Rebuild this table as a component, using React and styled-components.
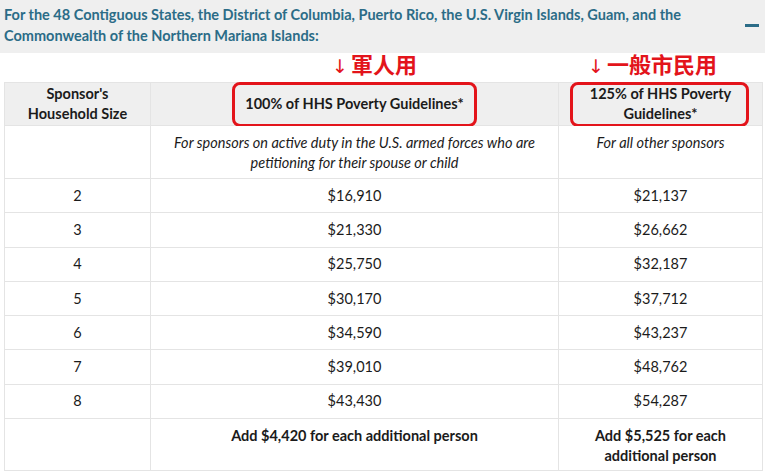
import React from "react";
import styled, { createGlobalStyle } from "styled-components";

const Global = createGlobalStyle`
  html, body {
    margin: 0;
    padding: 0;
    background: #ffffff;
  }
  body {
    font-family: "Lato", "Liberation Sans", sans-serif;
    color: #1b1b1b;
  }
`;

const Page = styled.div`
  width: 765px;
  height: 472px;
  overflow: hidden;
  background: #fff;
`;

const Banner = styled.div`
  height: 53px;
  background: #efefef;
  display: flex;
  align-items: flex-start;
  justify-content: space-between;
  padding: 4px 6px 0 4px;
  box-sizing: border-box;
`;

const BannerText = styled.p`
  margin: 0;
  font-size: 14.5px;
  line-height: 21px;
  font-weight: 700;
  color: #2b6c87;
  width: 710px;
`;

const Minus = styled.span`
  display: block;
  width: 14px;
  height: 2.5px;
  background: #2b6c87;
  margin-top: 20px;
`;

const Notes = styled.div`
  display: grid;
  grid-template-columns: 329px 256px 180px;
  height: 29px;
  align-items: start;
`;

const Note = styled.span`
  grid-column: ${(p) => p.col};
  font-family: "Noto Sans CJK TC", "Noto Sans CJK JP", sans-serif;
  font-weight: 700;
  font-size: 22px;
  line-height: 24px;
  color: #e3141b;
  padding-left: ${(p) => p.pad}px;
  margin-top: -2px;
`;

const Arrow = styled.span`
  font-weight: 400;
  font-family: "DejaVu Sans", sans-serif;
  font-size: 19px;
  margin-right: 3px;
`;

const Table = styled.div`
  margin-left: 4px;
  width: 758px;
  display: grid;
  grid-template-columns: 146px 408px 204px;
  border-left: 1px solid #e4e4e4;
  border-top: 1px solid #e4e4e4;
`;

const Cell = styled.div`
  position: relative;
  box-sizing: border-box;
  height: ${(p) => p.h}px;
  border-right: 1px solid #e4e4e4;
  border-bottom: 1px solid #e4e4e4;
  background: ${(p) => (p.head ? "#efefef" : "#fff")};
  display: flex;
  align-items: ${(p) => (p.top ? "flex-start" : "center")};
  justify-content: center;
  text-align: center;
  padding: ${(p) => (p.top ? "7px 8px 0" : "0 8px")};
  font-size: 14.5px;
  line-height: 20px;
  font-weight: ${(p) => (p.bold ? 700 : 400)};
  font-style: ${(p) => (p.italic ? "italic" : "normal")};
`;

const RedBox = styled.div`
  position: absolute;
  left: ${(p) => p.l}px;
  width: ${(p) => p.w}px;
  top: -1px;
  height: 45px;
  border: 3px solid #e3141b;
  border-radius: 8px;
  box-sizing: border-box;
  pointer-events: none;
`;

const rows = [
  ["2", "$16,910", "$21,137"],
  ["3", "$21,330", "$26,662"],
  ["4", "$25,750", "$32,187"],
  ["5", "$30,170", "$37,712"],
  ["6", "$34,590", "$43,237"],
  ["7", "$39,010", "$48,762"],
  ["8", "$43,430", "$54,287"],
];

export default function App() {
  return (
    <Page>
      <Global />
      <Banner>
        <BannerText>
          For the 48 Contiguous States, the District of Columbia, Puerto Rico,
          the U.S. Virgin Islands, Guam, and the Commonwealth of the Northern
          Mariana Islands:
        </BannerText>
        <Minus />
      </Banner>
      <Notes>
        <Note col={2} pad={3}>
          <Arrow>↓</Arrow>軍人用
        </Note>
        <Note col={3} pad={3}>
          <Arrow>↓</Arrow>一般市民用
        </Note>
      </Notes>
      <Table>
        <Cell head bold h={43}>
          Sponsor's
          <br />
          Household Size
        </Cell>
        <Cell head bold h={43}>
          100% of HHS Poverty Guidelines*
          <RedBox l={81} w={245} />
        </Cell>
        <Cell head bold h={43}>
          125% of HHS Poverty
          <br />
          Guidelines*
          <RedBox l={11} w={179} />
        </Cell>

        <Cell h={53} />
        <Cell italic top h={53}>
          For sponsors on active duty in the U.S. armed forces who are
          <br />
          petitioning for their spouse or child
        </Cell>
        <Cell italic top h={53}>
          For all other sponsors
        </Cell>

        {rows.map((r) => (
          <React.Fragment key={r[0]}>
            <Cell h={34.3}>{r[0]}</Cell>
            <Cell h={34.3}>{r[1]}</Cell>
            <Cell h={34.3}>{r[2]}</Cell>
          </React.Fragment>
        ))}

        <Cell h={52} />
        <Cell bold top h={52}>
          Add $4,420 for each additional person
        </Cell>
        <Cell bold top h={52}>
          Add $5,525 for each
          <br />
          additional person
        </Cell>
      </Table>
    </Page>
  );
}
